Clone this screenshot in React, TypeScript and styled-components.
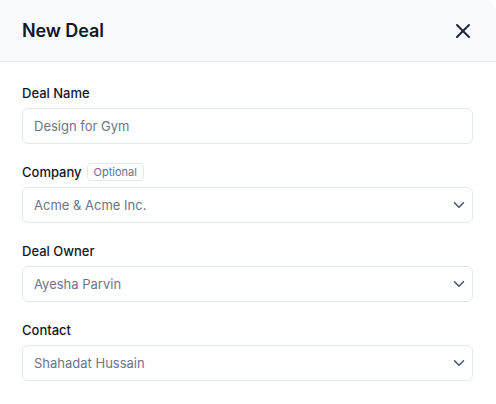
import React from 'react';
import styled, { createGlobalStyle } from 'styled-components';
import { X, ChevronDown } from 'lucide-react';

const GlobalStyle = createGlobalStyle`
  html, body {
    margin: 0;
    padding: 0;
    background: #ffffff;
    font-family: Inter, "Noto Sans", sans-serif;
    -webkit-font-smoothing: antialiased;
  }
  * { box-sizing: border-box; }
`;

const Panel = styled.div`
  position: relative;
  width: 496px;
  height: 404px;
  overflow: hidden;
  background: #ffffff;
`;

const Header = styled.div`
  height: 62px;
  display: flex;
  align-items: center;
  justify-content: space-between;
  padding: 0 21px 0 22px;
  background: #f8fafc;
  border-bottom: 1px solid #e5e9f0;
  border-top-right-radius: 10px;
`;

const Title = styled.h1`
  margin: 0;
  font-size: 18px;
  font-weight: 600;
  color: #0f172a;
  letter-spacing: -0.1px;
`;

const CloseButton = styled.button`
  background: none;
  border: none;
  padding: 0;
  display: flex;
  color: #1e293b;
  cursor: pointer;
`;

const Form = styled.div`
  display: flex;
  flex-direction: column;
  gap: 18px;
  padding: 21px 23px 0 22px;
`;

const Field = styled.div`
  display: flex;
  flex-direction: column;
  gap: 5px;
`;

const LabelRow = styled.div`
  display: flex;
  align-items: center;
  gap: 5px;
  height: 20px;
`;

const Label = styled.label`
  font-size: 13px;
  font-weight: 500;
  line-height: 20px;
  color: #111827;
`;

const Badge = styled.span`
  font-size: 11px;
  line-height: 16px;
  padding: 0 6px;
  color: #64748b;
  border: 1px solid #e2e8f0;
  border-radius: 4px;
  background: #ffffff;
`;

const Box = styled.div`
  height: 36px;
  display: flex;
  align-items: center;
  justify-content: space-between;
  padding: 0 4px 0 11px;
  border: 1px solid #e2e8f0;
  border-radius: 6px;
  background: #ffffff;
  font-size: 13px;
  color: #6b7689;
`;

const Chevron = styled(ChevronDown)`
  color: #475569;
`;

const Fade = styled.div`
  position: absolute;
  left: 0;
  right: 0;
  bottom: 0;
  height: 14px;
  background: linear-gradient(to bottom, rgba(255, 255, 255, 0.85), #ffffff);
`;

type FieldProps = {
  label: string;
  value: string;
  optional?: boolean;
  select?: boolean;
};

const FormField: React.FC<FieldProps> = ({ label, value, optional, select }) => (
  <Field>
    <LabelRow>
      <Label>{label}</Label>
      {optional && <Badge>Optional</Badge>}
    </LabelRow>
    <Box>
      <span>{value}</span>
      {select && <Chevron size={18} strokeWidth={2} />}
    </Box>
  </Field>
);

export default function App() {
  return (
    <>
      <GlobalStyle />
      <Panel>
        <Header>
          <Title>New Deal</Title>
          <CloseButton aria-label="Close">
            <X size={24} strokeWidth={2} />
          </CloseButton>
        </Header>
        <Form>
          <FormField label="Deal Name" value="Design for Gym" />
          <FormField label="Company" value="Acme & Acme Inc." optional select />
          <FormField label="Deal Owner" value="Ayesha Parvin" select />
          <FormField label="Contact" value="Shahadat Hussain" select />
          <FormField label="Deal Stage" value="Discovery" select />
        </Form>
        <Fade />
      </Panel>
    </>
  );
}
